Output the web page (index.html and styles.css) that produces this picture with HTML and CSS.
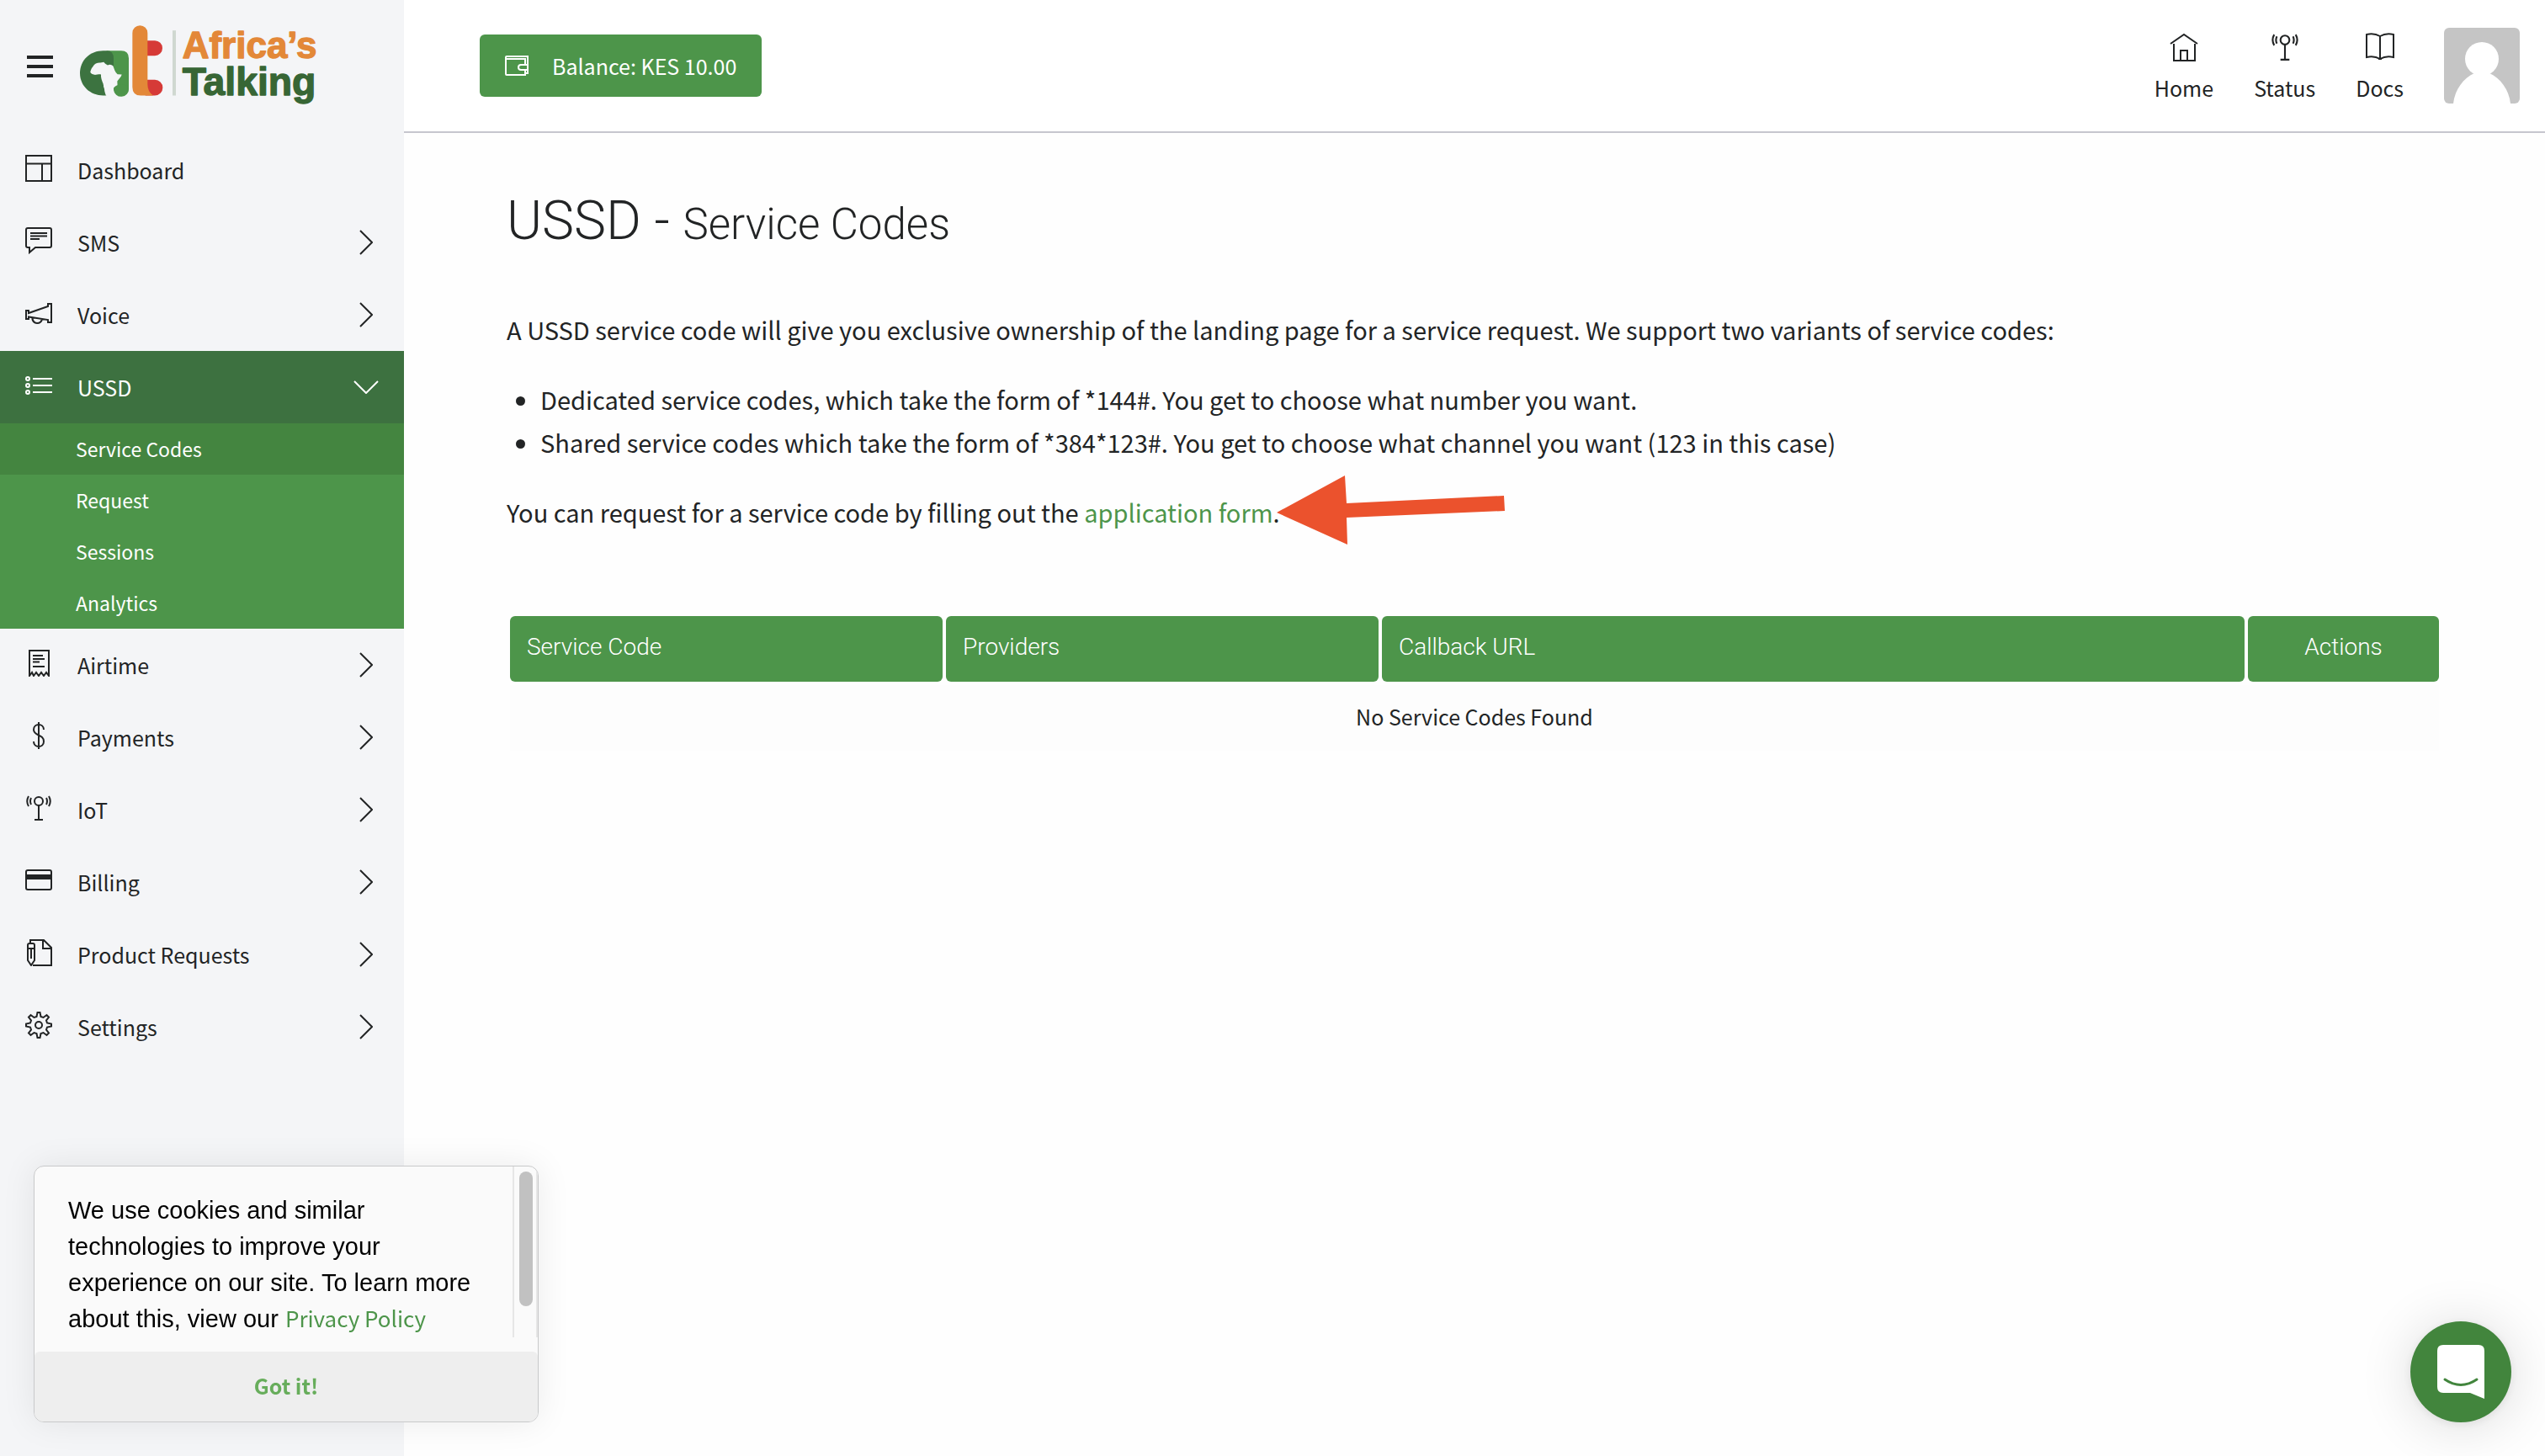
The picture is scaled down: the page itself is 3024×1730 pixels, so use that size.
FILE: index.html
```html
<!DOCTYPE html>
<html lang="en">
<head>
<meta charset="utf-8">
<meta name="viewport" content="width=device-width, initial-scale=1">
<title>USSD - Service Codes | Africa's Talking</title>
<link rel="stylesheet" href="styles.css">
</head>
<body>
<svg class="sprite" aria-hidden="true">
  <symbol id="chevron" viewBox="0 0 16 30"><path d="M1 1l14 14L1 29"/></symbol>
  <symbol id="antenna" viewBox="0 0 32 32"><circle cx="16" cy="8" r="5"/><path d="M16 13v17M11 30h10M7 4q-2 4 0 8M4 2q-3.500 6 0 12M25 4q2 4 0 8M28 2q3.500 6 0 12"/></symbol>
</svg>
<div class="layout">
  <aside class="sidebar">
    <div class="brand">
      <button class="menu-toggle" type="button" aria-label="Toggle menu"><span></span><span></span><span></span></button>
      <a class="logo" href="#" aria-label="Africa's Talking">
        <svg viewBox="285 90 840 290">
          <path fill="#4d954a" d="M380 180h52q27 0 27 27v107a27 27 0 0 1-54 0v-60h-25z"/>
          <path fill="#3c7340" d="M368 180h12q25 0 25 28v105l-26 27h-11c-46 0-83-33-83-80s37-80 83-80z"/>
          <path fill="#f4f5f7" d="M322 262c-1-9 3-18 9-25 6-11 17-15 27-14l12-2c4 6 9 9 14 11 9-5 14 0 19 2 4 10 6 21 16 30l15 1c-2 9-10 16-16 24 0 7 2 14-1 20-5 5-10 7-12 10v22H378c-3-9-6-15-6-24l-3-9c1-3-1-6-1-9-5-13-9-22-8-34-3-1-12-2-18 1-8 1-18-3-20-9z"/>
          <path fill="#4d954a" d="M405 313c5-6 12-11 26-12l28 3v11a27 27 0 0 1-54 4z"/>
          <path fill="#d63a37" d="M518 144h34a27 27 0 0 1 0 54h-34zM518 284h34a28 28 0 0 1 0 56h-34z"/>
          <path fill="#e38838" d="M472 117a27 27 0 0 1 54 0v183q0 26 20 40h-44q-30 0-30-30z"/>
          <path fill="#cfd8d0" d="M615 108h12v232h-12z"/>
          <text class="logo-top" x="650" y="208">Africa’s</text>
          <text class="logo-bottom" x="650" y="338">Talking</text>
        </svg>
      </a>
    </div>
    <nav aria-label="Main">
      <ul class="menu">
        <li><a class="menu-item" href="#"><svg class="icon" viewBox="0 0 32 32"><path d="M1 1h30v30H1zM1 10.500h30M20 10.500V31"/></svg><span>Dashboard</span></a></li>
        <li><button class="menu-item" type="button"><svg class="icon" viewBox="0 0 32 32"><path d="M3 1h26q2 0 2 2v19q0 2-2 2H12l-7 6v-6H3q-2 0-2-2V3q0-2 2-2zM6 7h20M6 10.500h20M6 14h11"/></svg><span>SMS</span><svg class="chevron"><use href="#chevron"/></svg></button></li>
        <li><button class="menu-item" type="button"><svg class="icon" viewBox="0 0 32 32"><path d="M1 13h3v3l23-8V5h4v22h-4v-3L4 20.500V23H1zM8 21q1 7 6 7 5 0 6-5"/></svg><span>Voice</span><svg class="chevron"><use href="#chevron"/></svg></button></li>
        <li>
          <button class="menu-item open" type="button" aria-expanded="true"><svg class="icon" viewBox="0 0 32 32"><circle cx="3" cy="8" r="2"/><circle cx="3" cy="16" r="2"/><circle cx="3" cy="24" r="2"/><path d="M9 8h23M9 16h23M9 24h23"/></svg><span>USSD</span><svg class="chevron"><use href="#chevron"/></svg></button>
          <ul class="submenu">
            <li><a class="current" href="#">Service Codes</a></li>
            <li><a href="#">Request</a></li>
            <li><a href="#">Sessions</a></li>
            <li><a href="#">Analytics</a></li>
          </ul>
        </li>
        <li><button class="menu-item" type="button"><svg class="icon" viewBox="0 0 32 32"><path d="M5 31V1h23v30l-3-4-3 4-3-4-3 4-3-4-3 4-2-4zM9 7h12M9 11h14M9 14.500h8M9 20h14"/></svg><span>Airtime</span><svg class="chevron"><use href="#chevron"/></svg></button></li>
        <li><button class="menu-item" type="button"><svg class="icon" viewBox="0 0 32 32"><path d="M16 0v32M22 9c0-4-3-6-6-6s-6 2-6 6c0 8 12 5 12 14 0 4-3 6-6 6s-6-2-6-6"/></svg><span>Payments</span><svg class="chevron"><use href="#chevron"/></svg></button></li>
        <li><button class="menu-item" type="button"><svg class="icon"><use href="#antenna"/></svg><span>IoT</span><svg class="chevron"><use href="#chevron"/></svg></button></li>
        <li><button class="menu-item" type="button"><svg class="icon" viewBox="0 0 32 32"><rect x="1" y="4" width="30" height="23" rx="2"/><path class="solid" d="M1 9h30v6H1z"/></svg><span>Billing</span><svg class="chevron"><use href="#chevron"/></svg></button></li>
        <li><button class="menu-item" type="button"><svg class="icon" viewBox="0 0 32 32"><path d="M6 4V1h16l9 9v21H9M21 1v10h10M3 7q0-2 2-2h4q2 0 2 2v18l-4 6-4-6zM3 11h8M7 11v12"/></svg><span>Product Requests</span><svg class="chevron"><use href="#chevron"/></svg></button></li>
        <li><button class="menu-item" type="button"><svg class="icon" viewBox="0 0 32 32"><circle cx="16" cy="16" r="4"/><path d="M14.500 1h3l1 5 3 1 4-3 2.500 2.500-3 4 1 3 5 1v3l-5 1-1 3 3 4-2.500 2.500-4-3-3 1-1 5h-3l-1-5-3-1-4 3L4 25.500l3-4-1-3-5-1v-3l5-1 1-3-3-4L6.500 4l4 3 3-1z"/></svg><span>Settings</span><svg class="chevron"><use href="#chevron"/></svg></button></li>
      </ul>
    </nav>
  </aside>
  <div class="page">
    <header class="topbar">
      <a class="balance" href="#">
        <svg class="wallet" viewBox="0 0 28 24"><path d="M24 18v5H2q-1 0-1-1V2q0-1 1-1h25v20h-3M1 4h23v7M27 11h-8q-3 0-3 3t3 3h8"/></svg>
        <span>Balance: KES 10.00</span>
      </a>
      <nav class="quick" aria-label="Quick links">
        <a href="#"><svg viewBox="0 0 34 34"><path d="M1 13L17 2l16 11M5 13v20h25V13M13 33V21h8v12"/></svg>Home</a>
        <a href="#"><svg><use href="#antenna"/></svg>Status</a>
        <a href="#"><svg viewBox="0 0 34 34"><path d="M1 2q9-2 16 2 7-4 16-2v27q-9-2-16 2-7-4-16-2zM17 4v28M15 31h4"/></svg>Docs</a>
      </nav>
      <button class="avatar" type="button" aria-label="Account"><svg viewBox="0 0 90 90"><circle cx="45" cy="37" r="20"/><path d="M11 90c2-17 12-30 25-36h18c13 6 23 19 25 36z"/></svg></button>
    </header>
    <main class="content">
      <h1>USSD - <small>Service Codes</small></h1>
      <div class="intro">
        <p>A USSD service code will give you exclusive ownership of the landing page for a service request. We support two variants of service codes:</p>
        <ul>
          <li>Dedicated service codes, which take the form of *144#. You get to choose what number you want.</li>
          <li>Shared service codes which take the form of *384*123#. You get to choose what channel you want (123 in this case)</li>
        </ul>
        <p>You can request for a service code by filling out the <a href="#">application form</a>.<span class="pointer"><svg viewBox="0 0 271 82"><path d="M0 44L81 0l2 33 187-9 1 18-188 8 1 32z"/></svg></span></p>
      </div>
      <table class="codes">
        <thead>
          <tr><th class="code">Service Code</th><th class="providers">Providers</th><th class="callback">Callback URL</th><th class="actions">Actions</th></tr>
        </thead>
        <tbody>
          <tr><td colspan="4">No Service Codes Found</td></tr>
        </tbody>
      </table>
    </main>
  </div>
</div>
<section class="cookies" aria-label="Cookie notice">
  <div class="cookies-body">
    <p>We use cookies and similar technologies to improve your experience on our site. To learn more about this, view our <a href="#">Privacy Policy</a></p>
    <div class="track"><span class="thumb"></span></div>
  </div>
  <button type="button">Got it!</button>
</section>
<button class="chat" type="button" aria-label="Open chat"><svg viewBox="0 0 56 64"><path fill="#fff" d="M7 0h42q7 0 7 7v57l-17-7H7q-7 0-7-7V7q0-7 7-7z"/><path fill="none" stroke="#42853d" stroke-width="3" stroke-linecap="round" d="M9 41q19 13 38 0"/></svg></button>
</body>
</html>
```
FILE: styles.css
```css
:root {
  --green: #4d954a;
  --ink: #222425;
  --sans: "Noto Sans CJK SC", "Noto Sans", sans-serif;
}

* { box-sizing: border-box; }

body {
  margin: 0;
  color: var(--ink);
  background: #fefefe;
  font-family: var(--sans);
  font-size: 25px;
}

ul, p, h1 { margin: 0; }

button {
  padding: 0;
  border: 0;
  background: none;
  color: inherit;
  font: inherit;
  cursor: pointer;
}

a { color: inherit; text-decoration: none; }

svg {
  display: block;
  fill: none;
  stroke: currentColor;
  stroke-width: 2;
}

.sprite { position: absolute; width: 0; height: 0; }

.layout {
  display: grid;
  grid-template-columns: 480px 1fr;
  min-height: 100vh;
}

/* Sidebar */
.sidebar { background: #f4f5f7; }

.brand {
  display: flex;
  align-items: center;
  gap: 32px;
  height: 159px;
  padding: 0 0 2px 32px;
}

.menu-toggle { display: grid; gap: 7px; width: 31px; }
.menu-toggle span { height: 4px; background: var(--ink); }

.logo svg { width: 280px; height: 97px; stroke: none; overflow: visible; }
.logo text {
  font-family: "Liberation Sans", Arial, sans-serif;
  font-weight: 700;
  stroke-width: 4;
  stroke-linejoin: round;
}
.logo .logo-top { fill: #e38838; stroke: #e38838; font-size: 132px; }
.logo .logo-bottom { fill: #376635; stroke: #376635; font-size: 139px; }

.menu, .submenu { padding: 0; list-style: none; }

.menu-item {
  display: flex;
  align-items: center;
  gap: 30px;
  width: 100%;
  height: 86px;
  padding: 0 37px 0 30px;
  text-align: left;
}
.menu-item span { flex: 1; padding-bottom: 1px; }
.menu-item .icon { width: 32px; height: 32px; margin-bottom: 4px; }
.icon .solid { fill: currentColor; stroke: none; }
.chevron { width: 16px; height: 30px; }

.menu-item.open { background: #3d7140; color: #fff; }
.menu-item.open .chevron { transform: rotate(90deg); }

.submenu { background: var(--green); color: #fff; font-size: 23px; }
.submenu a { display: block; padding-left: 90px; line-height: 61px; }
.submenu .current { background: #448540; }

/* Top bar */
.topbar {
  display: flex;
  align-items: center;
  height: 158px;
  padding: 0 30px 0 90px;
  border-bottom: 2px solid #c6c6ce;
  background: #fff;
}

.balance {
  display: flex;
  align-items: center;
  gap: 28px;
  height: 74px;
  padding: 0 30px;
  border-radius: 6px;
  background: var(--green);
  color: #fff;
}
.wallet { width: 28px; height: 24px; }

.quick {
  display: flex;
  gap: 48px;
  margin-left: auto;
  padding-top: 3px;
  line-height: 32px;
}
.quick a { display: grid; justify-items: center; gap: 15px; }
.quick svg { width: 34px; height: 34px; }

.avatar {
  width: 90px;
  height: 90px;
  margin-left: 48px;
  border-radius: 6px;
  overflow: hidden;
  background: #c5c5c5;
}
.avatar svg { fill: #fff; stroke: none; }

/* Content */
.content { padding: 67px 122px; }

h1 {
  font-family: Roboto, sans-serif;
  font-weight: 300;
  font-size: 64px;
  line-height: 76px;
}
h1 small { font-size: 51px; }

.intro {
  display: grid;
  gap: 32px;
  padding: 61px 0 94px;
  font-size: 29px;
  line-height: 51px;
}
.intro ul { padding-left: 40px; }
.intro a { color: var(--green); }

.pointer { position: relative; }
.pointer svg {
  position: absolute;
  left: -4px;
  top: -22px;
  width: 271px;
  height: 82px;
  fill: #eb522d;
  stroke: none;
}

.codes {
  width: 100%;
  table-layout: fixed;
  border-collapse: separate;
  border-spacing: 4px;
}
.codes th {
  height: 78px;
  padding: 0 20px 5px;
  border-radius: 6px;
  background: var(--green);
  color: #fff;
  font-family: Roboto, sans-serif;
  font-weight: 300;
  font-size: 28px;
  text-align: left;
}
.codes .code, .codes .providers { width: 514px; }
.codes .actions { width: 227px; text-align: center; }
.codes td { height: 78px; padding: 0 0 4px; background: #fdfdfd; text-align: center; }

/* Cookie notice */
.cookies {
  position: fixed;
  left: 40px;
  bottom: 40px;
  width: 600px;
  overflow: hidden;
  border: 1px solid #c8c9ca;
  border-radius: 12px;
  background: #fafafa;
  box-shadow: 0 0 40px rgba(0, 0, 0, 0.08);
}
.cookies-body { display: flex; padding-bottom: 17px; }
.cookies p {
  flex: 1;
  padding: 31px 30px 0 40px;
  color: #000;
  font-family: "Liberation Sans", Arial, sans-serif;
  font-size: 29px;
  line-height: 43px;
}
.cookies p a { color: var(--green); font-family: var(--sans); font-size: 26px; line-height: 1; }
.track {
  width: 30px;
  padding: 6px;
  border: solid #e6e6e6;
  border-width: 0 2px;
}
.thumb { display: block; width: 16px; height: 84%; border-radius: 8px; background: #c1c1c1; }
.cookies button {
  display: block;
  width: 100%;
  height: 83px;
  padding-bottom: 3px;
  border-radius: 6px 6px 0 0;
  background: #eee;
  color: #67ad5b;
  font-weight: 700;
}

/* Chat launcher */
.chat {
  position: fixed;
  right: 40px;
  bottom: 40px;
  display: grid;
  place-items: center;
  width: 120px;
  height: 120px;
  border-radius: 50%;
  background: #42853d;
  box-shadow: 0 2px 12px rgba(0, 0, 0, 0.08), 0 4px 64px rgba(0, 0, 0, 0.14);
}
.chat svg { width: 56px; height: 64px; stroke: none; }
```
